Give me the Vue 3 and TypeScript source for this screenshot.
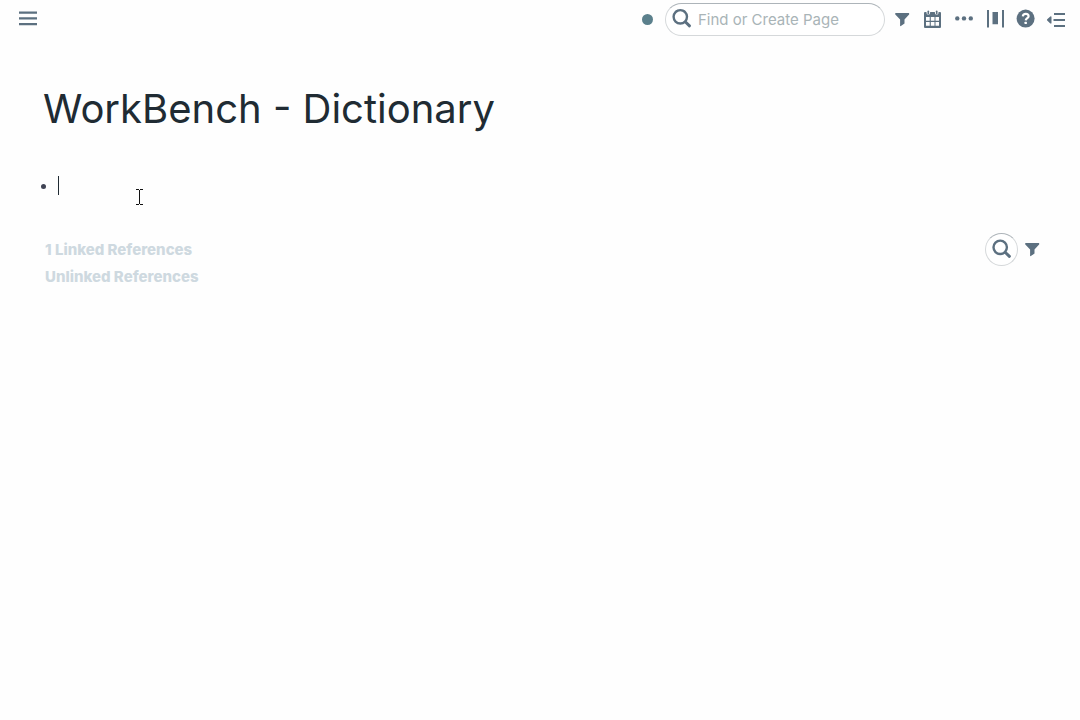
<script setup lang="ts">
import { ref } from 'vue'

const query = ref('')
const title = 'WorkBench - Dictionary'
</script>

<template>
  <div class="app">
    <header class="topbar">
      <button class="tool menu" aria-label="Open left sidebar">
        <svg class="icon" viewBox="0 0 20 20"><path d="M1 2.500h18v2.200H1zM1 8.300h18v2.200H1zM1 14h18v2.200H1z" /></svg>
      </button>
      <span class="status" role="img" aria-label="Synced"></span>
      <label class="search">
        <svg class="icon" viewBox="0 0 20 20">
          <circle class="line" cx="8.300" cy="7.800" r="6.700" />
          <path class="handle" d="M13.500 13l4 3.800" />
        </svg>
        <input v-model="query" type="text" placeholder="Find or Create Page" aria-label="Find or Create Page" />
      </label>
      <nav class="tools" aria-label="Page tools">
        <button class="tool" aria-label="Filter">
          <svg class="icon" viewBox="0 0 20 20"><path d="M4.600 4h13.200q.9.600.3 1.400L13.500 10.500V14.400l-3.600 2.700q-.8.400-.8-.3v-6.300L4.300 5.400Q3.700 4.600 4.600 4z" /></svg>
        </button>
        <button class="tool" aria-label="Daily notes">
          <svg class="icon" viewBox="0 0 20 20">
            <path fill-rule="evenodd" d="M3 3h1.500v1a1.800 1.800 0 0 0 3.600 0V3h4.800v1a1.800 1.800 0 0 0 3.600 0V3H18q1 0 1 1v14q0 1-1 1H3q-1 0-1-1V4q0-1 1-1zM4 8v3.700h3.700V8zM8.800 8v3.700h3.700V8zM13.500 8v3.700H17V8zM4 13v3.700h3.700V13zM8.800 13v3.700h3.700V13zM13.500 13v3.700H17V13z" />
            <rect x="5.500" y="1.500" width="1.600" height="4" rx=".8" />
            <rect x="13.900" y="1.500" width="1.600" height="4" rx=".8" />
          </svg>
        </button>
        <button class="tool" aria-label="More">
          <svg class="icon" viewBox="0 0 20 20"><circle cx="4.300" cy="9.400" r="2.200" /><circle cx="11" cy="9.400" r="2.200" /><circle cx="17.800" cy="9.400" r="2.200" /></svg>
        </button>
        <button class="tool" aria-label="Page width">
          <svg class="icon" viewBox="0 0 20 20"><path d="M3 1h2v17.500H3zM8.500 3H14v12.300H8.500zM18 1h2v17.500h-2z" /></svg>
        </button>
        <button class="tool" aria-label="Help">
          <svg class="icon" viewBox="0 0 20 20">
            <circle cx="10.600" cy="9.600" r="9" />
            <path class="mark" d="M7.800 7.300Q8 4.800 10.800 4.800T13.600 7.200C13.600 9 10.900 9.200 10.700 11.300" />
            <rect class="point" x="9.500" y="12.800" width="2.400" height="2.200" rx=".5" />
          </svg>
        </button>
        <button class="tool" aria-label="Open right sidebar">
          <svg class="icon" viewBox="0 0 20 20"><path d="M8 3.900H19v2.100H8zM7.500 9.900H19V12H7.500zM8 15.900H19V18H8zM1.200 10.200L4.300 7.400q1.200-.5 1.200.5v6q0 1-1.200.5L1.200 11.600q-.6-.7 0-1.400z" /></svg>
        </button>
      </nav>
    </header>

    <main class="page">
      <h1>{{ title }}</h1>
      <ul class="blocks">
        <li><span class="bullet"></span><span class="caret"></span></li>
      </ul>
      <section class="references">
        <div class="labels">
          <button>1 Linked References</button>
          <button>Unlinked References</button>
        </div>
        <div class="actions">
          <button class="round" aria-label="Search references">
            <svg class="icon" viewBox="0 0 20 20">
              <circle class="line" cx="8.200" cy="7.300" r="6.700" />
              <path class="handle" d="M13.400 12.500l4 3.800" />
            </svg>
          </button>
          <button class="tool" aria-label="Filter references">
            <svg class="icon" viewBox="0 0 20 20"><path d="M4.600 3h13.200q.9.600.3 1.400L13.500 9.500V13.400l-3.600 2.700q-.8.400-.8-.3V9.500L4.300 4.400Q3.700 3.600 4.600 3z" /></svg>
          </button>
        </div>
      </section>
    </main>

    <svg class="pointer" viewBox="0 0 7 16" aria-hidden="true"><path d="M0 0h3v1H0zM4 0h3v1H4zM3 1h1v14H3zM0 15h3v1H0zM4 15h3v1H4z" /></svg>
  </div>
</template>

<style>
body {
  margin: 0;
  background: #fefefe;
}
</style>

<style scoped>
.app {
  position: relative;
  min-height: 100vh;
  color: #202b33;
  font-family: Inter, "Liberation Sans", sans-serif;
}

button {
  margin: 0;
  padding: 0;
  border: 0;
  background: none;
  font: inherit;
  color: inherit;
  cursor: pointer;
}

.topbar {
  display: flex;
  align-items: center;
  height: 38px;
  padding: 0 8px 0 13px;
}

.tool {
  display: flex;
  align-items: center;
  width: 31px;
  height: 38px;
  padding-left: 5px;
}

.icon {
  display: block;
  flex: none;
  width: 20px;
  height: 20px;
  overflow: visible;
  fill: #5c7080;
}

.line,
.handle {
  fill: none;
  stroke: #5c7080;
  stroke-width: 2.4;
}

.handle {
  stroke-width: 3;
  stroke-linecap: round;
}

.mark {
  fill: none;
  stroke: #fff;
  stroke-width: 2.2;
}

.point {
  fill: #fff;
}

.status {
  width: 11px;
  height: 11px;
  margin: 0 12px 0 auto;
  border-radius: 50%;
  background: #5b808c;
}

.search {
  display: flex;
  align-items: center;
  box-sizing: border-box;
  width: 220px;
  height: 33px;
  margin-right: 1px;
  padding: 0 12px 0 6px;
  border: 1px solid #d5d8da;
  border-top-color: #adb4b9;
  border-radius: 17px;
  background: #fff;
}

.search input {
  flex: 1;
  min-width: 0;
  margin-left: 6px;
  padding: 2px 0 0;
  border: 0;
  outline: 0;
  background: none;
  color: #202b33;
  font: 15px/20px Inter, "Liberation Sans", sans-serif;
}

.search input::placeholder {
  color: #a9b4b7;
  opacity: 1;
}

.tools {
  display: flex;
}

.page {
  padding: 46px 36px 0 43px;
}

h1 {
  margin: 0;
  font-size: 40px;
  font-weight: 400;
  line-height: 50px;
}

.blocks {
  margin: 41px 0 0;
  padding: 0;
  list-style: none;
}

.blocks li {
  display: flex;
  align-items: center;
  height: 21px;
  margin-left: -2px;
}

.bullet {
  width: 5px;
  height: 5px;
  margin-top: 2px;
  border-radius: 50%;
  background: #3f4354;
}

.caret {
  width: 1px;
  height: 19px;
  margin-left: 12px;
  background: #202b33;
}

.references {
  display: flex;
  justify-content: space-between;
  align-items: flex-start;
  margin-top: 37px;
}

.labels {
  display: flex;
  flex-direction: column;
  align-items: flex-start;
  padding: 3px 0 0 2px;
}

.labels button {
  color: #ced9e0;
  font-size: 15px;
  font-weight: 800;
  line-height: 27px;
}

.actions {
  display: flex;
  align-items: center;
}

.round {
  display: flex;
  align-items: center;
  justify-content: center;
  width: 33px;
  height: 33px;
  border: 1px solid #d5d8da;
  border-top-color: #adb4b9;
  border-radius: 50%;
  background: #fff;
}

.actions .tool {
  width: 26px;
  height: 33px;
  padding-left: 3px;
}

.pointer {
  position: absolute;
  top: 189px;
  left: 136px;
  width: 7px;
  height: 16px;
  fill: #111;
}
</style>
